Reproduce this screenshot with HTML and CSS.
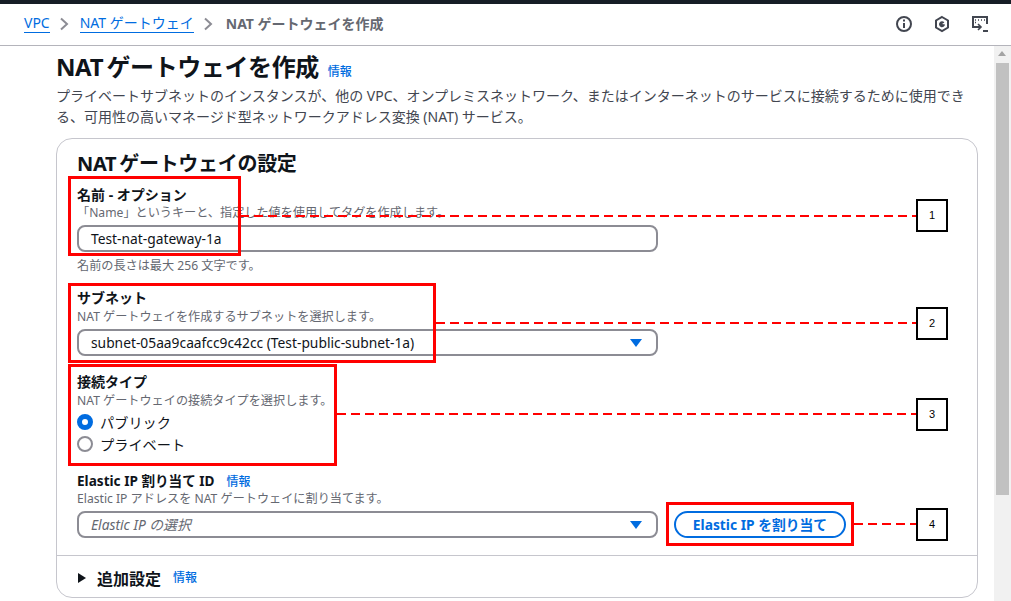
FILE: index.html
```html
<!DOCTYPE html>
<html lang="ja">
<head>
<meta charset="utf-8">
<title>NAT ゲートウェイを作成</title>
<link rel="stylesheet" href="styles.css">
</head>
<body>
<div class="topstrip"></div>
<header class="crumbbar">
  <nav class="crumbs">
    <a class="crumb-link">VPC</a>
    <svg class="chev" viewBox="0 0 10 14"><path d="M2 1.5 8 7l-6 5.5" fill="none" stroke="#8c8c94" stroke-width="2"/></svg>
    <a class="crumb-link">NAT ゲートウェイ</a>
    <svg class="chev" viewBox="0 0 10 14"><path d="M2 1.5 8 7l-6 5.5" fill="none" stroke="#8c8c94" stroke-width="2"/></svg>
    <span class="crumb-current">NAT ゲートウェイを作成</span>
  </nav>
  <div class="tools">
    <svg class="tool" viewBox="0 0 18 18"><circle cx="9" cy="9" r="7" fill="none" stroke="#424650" stroke-width="2"/><path d="M9 8v5" stroke="#424650" stroke-width="2"/><path d="M9 4.600v2" stroke="#424650" stroke-width="2"/></svg>
    <svg class="tool" viewBox="0 0 18 18"><path d="M9 2l6 3.500v7L9 16l-6-3.500v-7z" fill="none" stroke="#424650" stroke-width="2"/><path d="M11.400 7.400A3 3 0 1 0 12 9.500L9 9z" fill="#424650"/></svg>
    <svg class="tool" viewBox="0 0 18 18"><path d="M7 12H2V2h14v7" fill="none" stroke="#424650" stroke-width="2"/><path d="M4 5h1M7 5h1M10 5h1M13 5h1M4 7.500h1" stroke="#424650" stroke-width="1.600"/><path d="M7 9l3 3-3 3" fill="none" stroke="#424650" stroke-width="1.600"/><path d="M3 12h6M12 16h5" stroke="#424650" stroke-width="1.800"/></svg>
  </div>
</header>
<div class="viewport">
  <main class="content">
    <div class="titleline">
      <h1 class="title">NAT ゲートウェイを作成</h1>
      <a class="info">情報</a>
    </div>
    <p class="lead">プライベートサブネットのインスタンスが、他の VPC、オンプレミスネットワーク、またはインターネットのサービスに接続するために使用できる、可用性の高いマネージド型ネットワークアドレス変換 (NAT) サービス。</p>
    <section class="card">
      <h2 class="card-title">NAT ゲートウェイの設定</h2>
      <div class="field field-name">
        <div class="label">名前 - オプション</div>
        <div class="desc">「Name」というキーと、指定した値を使用してタグを作成します。</div>
        <div class="input"><span class="val">Test-nat-gateway-1a</span></div>
        <div class="hint">名前の長さは最大 256 文字です。</div>
      </div>
      <div class="field field-subnet">
        <div class="label">サブネット</div>
        <div class="desc">NAT ゲートウェイを作成するサブネットを選択します。</div>
        <div class="input"><span class="val">subnet-05aa9caafcc9c42cc (Test-public-subnet-1a)</span><i class="caret"></i></div>
      </div>
      <div class="field field-type">
        <div class="label">接続タイプ</div>
        <div class="desc">NAT ゲートウェイの接続タイプを選択します。</div>
        <div class="radios">
          <div class="radio-row"><i class="radio radio-on"></i><span>パブリック</span></div>
          <div class="radio-row"><i class="radio"></i><span>プライベート</span></div>
        </div>
      </div>
      <div class="field field-eip">
        <div class="label">Elastic IP 割り当て ID<a class="info info-label">情報</a></div>
        <div class="desc">Elastic IP アドレスを NAT ゲートウェイに割り当てます。</div>
        <div class="eip-row">
          <div class="input input-eip"><span class="placeholder">Elastic IP の選択</span><i class="caret"></i></div>
          <button class="btn">Elastic IP を割り当て</button>
        </div>
      </div>
      <div class="expander">
        <i class="tri"></i>
        <span class="exp-title">追加設定</span>
        <a class="info">情報</a>
      </div>
    </section>
  </main>
  <div class="scrollbar">
    <i class="sb-up"></i>
    <div class="sb-thumb"></div>
  </div>
</div>

<div class="redbox box1"></div>
<div class="redbox box2"></div>
<div class="redbox box3"></div>
<div class="redbox box4"></div>
<div class="dash dash1"></div>
<div class="dash dash2"></div>
<div class="dash dash3"></div>
<div class="dash dash4"></div>
<div class="num num1">1</div>
<div class="num num2">2</div>
<div class="num num3">3</div>
<div class="num num4">4</div>
</body>
</html>
```
FILE: styles.css
```css
* { box-sizing: border-box; }
html, body { margin: 0; height: 100%; overflow: hidden; }
body {
  background: #fff;
  color: #0f141a;
  font-family: "Noto Sans", "Noto Sans CJK JP", sans-serif;
  position: relative;
  width: 1011px;
  height: 601px;
}
.topstrip { height: 4px; background: #161d26; }
.crumbbar {
  height: 42px;
  border-bottom: 1px solid #b4b4bb;
  display: flex;
  align-items: center;
  justify-content: space-between;
  padding: 0 22px 2px 24px;
}
.crumbs { display: flex; align-items: center; font-size: 14px; line-height: 18px; }
.crumb-link { color: #006ce0; border-bottom: 1px solid #006ce0; }
.chev { width: 10px; height: 14px; margin: 0 11px 0 9px; }
.crumb-current { color: #656871; font-weight: 700; font-size: 14px; margin-left: 2px; }
.tools { display: flex; gap: 20px; }
.tool { width: 18px; height: 18px; display: block; }

.viewport { display: flex; height: 555px; }
.content { width: 994px; padding: 5px 17px 0 56px; }
.titleline { display: flex; align-items: baseline; height: 32px; }
.title { margin: 0; font-size: 24px; line-height: 32px; font-weight: 700; letter-spacing: -.4px; word-spacing: -2.500px; }
.info { color: #006ce0; font-size: 12px; font-weight: 500; line-height: 16px; margin-left: 9px; word-spacing: 0; }
.lead { margin: 2px 0 0; color: #424650; font-size: 14px; line-height: 21px; width: 922px; }

.card {
  margin-top: 11px;
  height: 460px;
  width: 922px;
  border: 1px solid #c6c6cd;
  border-radius: 16px;
  padding: 12px 0 0 20px;
}
.card-title { margin: 0; font-size: 20px; line-height: 26px; font-weight: 700; letter-spacing: -.3px; word-spacing: -2px; }
.field { width: 581px; }
.label { font-size: 14px; line-height: 18px; font-weight: 700; }
.desc { font-size: 12.150px; line-height: 16px; color: #656871; margin-top: 2px; }
.hint { font-size: 12.150px; line-height: 16px; color: #656871; margin-top: 6px; }
.input {
  margin-top: 4px;
  height: 27px;
  border: 2px solid #8c8c94;
  border-radius: 8px;
  padding: 0 12px;
  font-size: 13.800px;
  line-height: 23px;
  display: flex;
  align-items: center;
  justify-content: space-between;
}
.val { color: #0f141a; }
.placeholder { color: #656871; font-style: italic; }
.caret {
  width: 0; height: 0;
  border-left: 6px solid transparent;
  border-right: 6px solid transparent;
  border-top: 8px solid #006ce0;
  margin-right: 2px;
}
.field-name { margin-top: 9px; }
.field-name .desc { margin-top: 1px; }
.field-subnet { margin-top: 15px; }
.field-type { margin-top: 17px; }
.field-eip { margin-top: 17px; width: 780px; }
.field-eip .label { font-size: 13.600px; }
.field-eip .desc { margin-top: 1px; }
.radios { margin-top: 2px; }
.radio-row { display: flex; align-items: center; height: 22px; font-size: 14.200px; color: #0f141a; gap: 7px; }
.radio { width: 16px; height: 16px; border-radius: 50%; border: 2px solid #8c8c94; background: #fff; display: block; }
.radio-on { border: 5px solid #006ce0; }
.info-label { margin-left: 12px; }
.eip-row { display: flex; gap: 16px; margin-top: 4px; }
.input-eip { width: 581px; margin-top: 0; }
.btn {
  width: 172px;
  height: 27px;
  border: 2px solid #006ce0;
  border-radius: 14px;
  background: #fff;
  color: #006ce0;
  font: 700 13.800px/20px "Noto Sans", "Noto Sans CJK JP", sans-serif;
  padding: 0;
}
.expander {
  margin: 17px 0 0 -20px;
  height: 43px;
  border-top: 1px solid #c6c6cd;
  padding: 2px 0 0 21px;
  display: flex;
  align-items: center;
}
.tri {
  width: 0; height: 0;
  border-top: 5px solid transparent;
  border-bottom: 5px solid transparent;
  border-left: 8px solid #0f141a;
}
.exp-title { font-size: 16px; font-weight: 700; margin-left: 11px; }
.expander .info { margin-left: 12px; }

.scrollbar { width: 17px; height: 555px; background: #f1f1f1; padding: 17px 2px 0; position: relative; }
.sb-up {
  position: absolute; left: 4px; top: 5px;
  width: 0; height: 0;
  border-left: 4px solid transparent;
  border-right: 4px solid transparent;
  border-bottom: 5px solid #a3a3a3;
}
.sb-thumb { height: 432px; background: #c1c1c1; }

.redbox { position: absolute; border: 3px solid #f00; }
.box1 { left: 68px; top: 176px; width: 173px; height: 80px; }
.box2 { left: 68px; top: 283px; width: 368px; height: 80px; }
.box3 { left: 68px; top: 364px; width: 269px; height: 102px; }
.box4 { left: 666px; top: 502px; width: 188px; height: 44px; }
.dash {
  position: absolute; height: 2px;
  background: repeating-linear-gradient(90deg, #f00 0 9px, transparent 9px 14px);
}
.dash1 { left: 240px; top: 215px; width: 677px; }
.dash2 { left: 436px; top: 322px; width: 481px; }
.dash3 { left: 337px; top: 413px; width: 580px; }
.dash4 { left: 854px; top: 523px; width: 63px; }
.num {
  position: absolute; width: 32px; height: 33px;
  border: 2px solid #000; background: #fff;
  font-family: "Liberation Sans", sans-serif;
  font-size: 11px; line-height: 29px; text-align: center; color: #000;
}
.num1 { left: 916px; top: 199px; }
.num2 { left: 916px; top: 307px; }
.num3 { left: 916px; top: 398px; }
.num4 { left: 916px; top: 508px; }
```
